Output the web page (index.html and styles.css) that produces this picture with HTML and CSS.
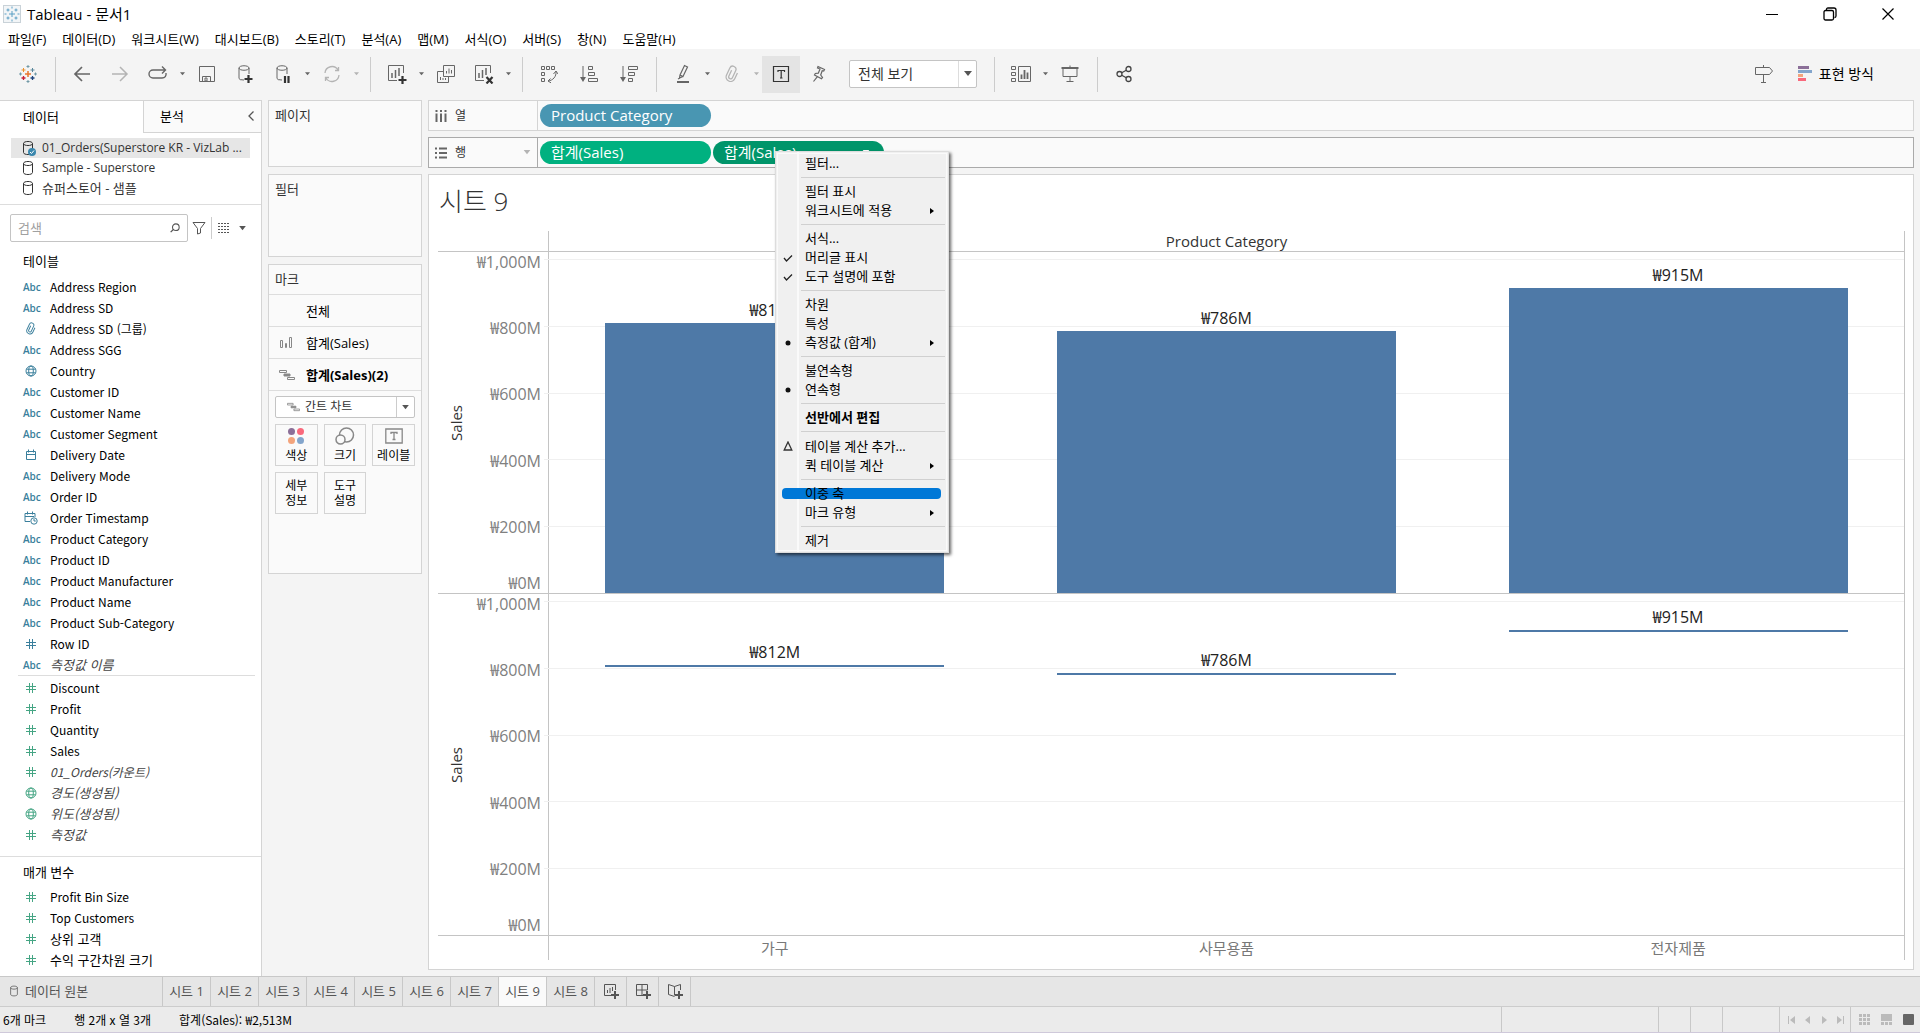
FILE: index.html
```html
<!DOCTYPE html>
<html lang="ko">
<head>
<meta charset="utf-8">
<title>Tableau - 문서1</title>
<link rel="stylesheet" href="styles.css">
</head>
<body>

<!-- shared icons -->
<svg class="sprite">
  <symbol id="i-down" viewBox="0 0 8 6"><path d="M0 0h8L4 5z" fill="currentColor"/></symbol>
  <symbol id="i-hash" viewBox="0 0 12 12"><path d="M4.500 1v10M7.500 1v10M1 4.500h10M1 7.500h10" fill="none" stroke="currentColor"/></symbol>
  <symbol id="i-globe" viewBox="0 0 12 12"><g fill="none" stroke="currentColor"><circle cx="6" cy="6" r="5"/><ellipse cx="6" cy="6" rx="2.3" ry="5"/><path d="M1.5 4.2h9M1.5 7.8h9"/></g></symbol>
  <symbol id="i-clip" viewBox="0 0 12 14"><path transform="rotate(25 6 7)" d="M4.500 4.500v5a1.500 1.500 0 0 0 3 0v-6a2.500 2.500 0 0 0-5 0v6a3.500 3.500 0 0 0 7 0v-5" fill="none" stroke="currentColor"/></symbol>
  <symbol id="i-cal" viewBox="0 0 12 12"><path d="M1.500 2.500h9v8h-9zM1.500 5.500h9M3.500 .5v3M8.500 .5v3" fill="none" stroke="currentColor"/></symbol>
  <symbol id="i-caltime" viewBox="0 0 14 14"><g fill="none" stroke="currentColor"><path d="M6 10.500H1v-8h10v3.500M1 5.500h9M3.500 .5v3M8.500 .5v3"/><circle cx="10" cy="10" r="3.200"/><path d="M10 8v2h1.800"/></g></symbol>
  <symbol id="i-db" viewBox="0 0 12 16"><path d="M1.500 3.500v9c0 2.700 9 2.700 9 0v-9M1.500 3.500c0-2.700 9-2.700 9 0s-9 2.700-9 0z" fill="none" stroke="currentColor"/></symbol>
  <symbol id="i-gantt" viewBox="0 0 16 12"><g fill="none" stroke="currentColor"><path d="M.5 1.500h7v2h-7z"/><path d="M5 5h6v2H5z" fill="currentColor"/><path d="M8.500 8.500h7v2h-7z"/></g></symbol>
</svg>

<header class="titlebar">
  <svg class="app-icon" width="18" height="18" viewBox="0 0 18 18"><rect x=".5" y=".5" width="17" height="17" fill="#f2f5f7" stroke="#c9d2d8"/><path d="M9 6v6M6 9h6M5 3.500v3M3.500 5h3M13 3.500v3M11.500 5h3M5 11.500v3M3.500 13h3M13 11.500v3M11.500 13h3M9 1.500v2M9 14.500v2M1.500 9h2M14.500 9h2" stroke="#5b9fc4"/></svg>
  <h1 class="app-title">Tableau - 문서1</h1>
  <div class="window-buttons">
    <button aria-label="최소화"><svg width="12" height="12"><path d="M0 6.500h12" stroke="#000"/></svg></button>
    <button aria-label="이전 크기로"><svg width="14" height="14"><path d="M3.500 3V2.500q0-1.500 1.500-1.500h6q2 0 2 2v6q0 1.500-1.500 1.500" fill="none" stroke="#000" stroke-width="1.300"/><rect x="1" y="3.500" width="9.500" height="9.500" rx="1.500" fill="none" stroke="#000" stroke-width="1.300"/></svg></button>
    <button aria-label="닫기"><svg width="12" height="12"><path d="M.5 .5l11 11M11.500 .5l-11 11" stroke="#000" stroke-width="1.200"/></svg></button>
  </div>
</header>

<nav class="menubar">
  <button>파일(F)</button>
  <button>데이터(D)</button>
  <button>워크시트(W)</button>
  <button>대시보드(B)</button>
  <button>스토리(T)</button>
  <button>분석(A)</button>
  <button>맵(M)</button>
  <button>서식(O)</button>
  <button>서버(S)</button>
  <button>창(N)</button>
  <button>도움말(H)</button>
</nav>

<div class="toolbar">
  <button class="tool" aria-label="시작 페이지"><svg width="18" height="18" viewBox="0 0 18 18"><path d="M9 6v6M6 9h6" stroke="#e8762c" stroke-width="1.500"/><path d="M4.500 3v4M2.500 5h4" stroke="#eb912c"/><path d="M13.500 3v4M11.500 5h4" stroke="#59879b"/><path d="M4.500 11v4M2.500 13h4" stroke="#c72035" stroke-width="1.300"/><path d="M13.500 11v4M11.500 13h4" stroke="#1f457e" stroke-width="1.300"/><path d="M9 0v3M7.500 1.500h3M9 15v3M7.500 16.500h3M1.500 7.500v3M0 9h3M16.500 7.500v3M15 9h3" stroke="#7199a6"/></svg></button>
  <span class="sep"></span>
  <button class="tool" aria-label="뒤로"><svg width="18" height="18"><path d="M17 9H2M9 2L2 9l7 7" fill="none" stroke="currentColor" stroke-width="1.700"/></svg></button>
  <button class="tool off" aria-label="앞으로"><svg width="18" height="18"><path d="M1 9h15M9 2l7 7-7 7" fill="none" stroke="currentColor" stroke-width="1.500"/></svg></button>
  <button class="tool" aria-label="다시 재생"><svg width="20" height="16"><path d="M8 12H5a4 4 0 0 1 0-8h12M14 .500l3.500 3.500-3.500 3.500M18 7c.5 3-1 5-4 5H8" fill="none" stroke="currentColor" stroke-width="1.400"/></svg></button>
  <button class="caret"><svg width="5" height="4"><use href="#i-down"/></svg></button>
  <button class="tool" aria-label="저장"><svg width="18" height="18"><path d="M1.500 1.500h15v15h-15zM4.500 16v-4.500h8V16M7 13h2v3H7z" fill="none" stroke="currentColor"/></svg></button>
  <button class="tool" aria-label="새 데이터 원본"><svg width="18" height="20"><path d="M13 10V4M3 4v10.500q0 1.500 5 1.500M3 4c0-3 10-3 10 0s-10 3-10 0z" fill="none" stroke="currentColor"/><path d="M12.500 11v8M8.500 15h8" stroke="#333" stroke-width="2.200"/></svg></button>
  <button class="tool" aria-label="자동 업데이트 일시 중지"><svg width="18" height="20"><path d="M13 10V4M3 4v10.500q0 1.500 5 1.500M3 4c0-3 10-3 10 0s-10 3-10 0z" fill="none" stroke="currentColor"/><path d="M11 12v7M14.500 12v7" stroke="#333" stroke-width="2.200"/></svg></button>
  <button class="caret"><svg width="5" height="4"><use href="#i-down"/></svg></button>
  <button class="tool off" aria-label="새로 고침"><svg width="18" height="18"><path d="M2 8a7 7 0 0 1 13-3M16 10a7 7 0 0 1-13 3M12 5.500h3.500V2M6 12.500H2.500V16" fill="none" stroke="currentColor" stroke-width="1.300"/></svg></button>
  <button class="caret off"><svg width="5" height="4"><use href="#i-down"/></svg></button>
  <span class="sep"></span>
  <button class="tool" aria-label="새 워크시트"><svg width="20" height="20"><path d="M16.500 9V1.500h-15v15H10" fill="none" stroke="currentColor"/><path d="M5 14V9M8.500 14V6M12 12V4" stroke="currentColor" stroke-width="1.500"/><path d="M15.500 12v8M11.500 16h8" stroke="#333" stroke-width="2.200"/></svg></button>
  <button class="caret"><svg width="5" height="4"><use href="#i-down"/></svg></button>
  <button class="tool" aria-label="복제"><svg width="18" height="18"><path d="M6.500 .5h11v11h-11zM6 6.500H.5v11h11V12M9.500 8.500V6M12 8.500V3.500M14.500 8.500V5M3.500 15v-3M6 15v-2M8.500 15v-2" fill="none" stroke="currentColor"/></svg></button>
  <button class="tool" aria-label="시트 지우기"><svg width="20" height="20"><path d="M16.500 9V1.500h-15v15H10" fill="none" stroke="currentColor"/><path d="M5 14V9M8.500 14V6M12 11V4" stroke="currentColor" stroke-width="1.500"/><path d="M12.500 13l6 6.500M18.500 13l-6 6.500" stroke="#333" stroke-width="2.200"/></svg></button>
  <button class="caret"><svg width="5" height="4"><use href="#i-down"/></svg></button>
  <span class="sep"></span>
  <div class="tool-group">
    <button class="tool" aria-label="행과 열 바꾸기"><svg width="18" height="18"><path d="M1.500 1.500h3v3h-3zM6.500 1.500h3v3h-3zM11.500 1.500h3v3h-3zM1.500 7.500h3v3h-3zM1.500 13.500h3v3h-3zM16 6.500c.5 5-3 9-8 9.500M13.500 9L16 6l2 3M10.500 13.500L8 16l3 1.800" fill="none" stroke="currentColor"/></svg></button>
    <button class="tool" aria-label="오름차순 정렬"><svg width="18" height="18"><path d="M3 1v13M8.500 1.500h4v3h-4zM8.500 7.500h6v3h-6zM8.500 13.500h9v3h-9z" fill="none" stroke="currentColor"/><path d="M0 12h6l-3 5z" fill="currentColor"/></svg></button>
    <button class="tool" aria-label="내림차순 정렬"><svg width="18" height="18"><path d="M3 1v13M8.500 1.500h9v3h-9zM8.500 7.500h6v3h-6zM8.500 13.500h4v3h-4z" fill="none" stroke="currentColor"/><path d="M0 12h6l-3 5z" fill="currentColor"/></svg></button>
  </div>
  <span class="sep"></span>
  <button class="tool" aria-label="하이라이트"><svg width="14" height="20"><path d="M4 11L8.500 1.500l3 1.500L7 12.500zM4 11l-.5 3 3.500-1.500M2 15l2-1" fill="none" stroke="currentColor" stroke-width="1.200"/><path d="M1 18h12" stroke="currentColor" stroke-width="2"/></svg></button>
  <button class="caret"><svg width="5" height="4"><use href="#i-down"/></svg></button>
  <button class="tool off" aria-label="멤버 그룹화"><svg width="16" height="18"><use href="#i-clip"/></svg></button>
  <button class="caret off"><svg width="5" height="4"><use href="#i-down"/></svg></button>
  <button class="tool on" aria-label="마크 레이블 표시"><svg width="18" height="18"><path d="M1.500 1.500h15v15h-15zM6 7V5.500h6.500V7M9.200 5.500v7.500M8 13h2.500" fill="none" stroke="#333" stroke-width="1.200"/></svg></button>
  <button class="tool" aria-label="축 고정"><svg width="16" height="18"><path d="M7 1.500l6.500 3-.8 1.500-1.500-.3-1.500 4.300 1.800 2.500-1 1.200L3.500 10l.8-1.500 3-.3L9 4 6.500 3zM6.200 11.800L2.500 16.500" fill="none" stroke="currentColor" stroke-width="1.200"/></svg></button>
  <span class="select fit">
    <select aria-label="맞춤"><option>전체 보기</option></select>
    <span class="select-arrow"><svg width="8" height="6"><use href="#i-down"/></svg></span>
  </span>
  <span class="sep"></span>
  <button class="tool" aria-label="카드 표시/숨기기"><svg width="22" height="18"><path d="M1.500 1.500h4v3h-4zM1.500 7.500h4v3h-4zM1.500 13.500h4v3h-4zM8.500 1.500h12v15h-12z" fill="none" stroke="currentColor"/><path d="M11.500 14V9.500M14.500 14V5M17.500 14V7.500" stroke="currentColor" stroke-width="1.800"/></svg></button>
  <button class="caret"><svg width="5" height="4"><use href="#i-down"/></svg></button>
  <button class="tool" aria-label="프레젠테이션 모드"><svg width="18" height="18"><path d="M.5 3h17" stroke="currentColor" stroke-width="2"/><path d="M2 3v8.500h14V3M9 .5V2M9 11.500V16M5.500 16.500h7" fill="none" stroke="currentColor"/></svg></button>
  <span class="sep"></span>
  <button class="tool" aria-label="공유"><svg width="16" height="18"><g fill="none" stroke="#444" stroke-width="1.300"><circle cx="3.500" cy="9" r="2.500"/><circle cx="12.500" cy="4" r="2.500"/><circle cx="12.500" cy="14" r="2.500"/><path d="M5.700 7.800l4.600-2.600M5.700 10.200l4.600 2.600"/></g></svg></button>
  <button class="tool guide" aria-label="데이터 가이드"><svg width="20" height="20"><path d="M1.500 3.500h14l3 3.500-3 3.500h-14zM9.500 1v2.500M9.500 10.500V18M7 18.500h5" fill="none" stroke="currentColor"/></svg></button>
  <button class="showme"><svg width="14" height="16"><path fill="#8b6f98" d="M0 0h11v3H0z"/><path fill="#83a5cc" d="M0 4h14v3H0z"/><path fill="#f3a47c" d="M0 8h5v3H0z"/><path fill="#f9697c" d="M0 12h8v3H0z"/></svg>표현 방식</button>
</div>

<main class="workspace">

  <aside class="sidebar">
    <div class="side-tabs">
      <button class="side-tab active">데이터</button>
      <button class="side-tab">분석<svg width="6" height="10"><path d="M5.500 .5L1 5l4.500 4.500" fill="none" stroke="#555" stroke-width="1.300"/></svg></button>
    </div>
    <ul class="sources">
      <li class="selected"><svg width="14" height="16"><use href="#i-db" width="12"/><circle cx="10" cy="12" r="4" fill="#3a87ad"/><path d="M8 12l1.500 1.500L12 10.500" fill="none" stroke="#fff"/></svg><span>01_Orders(Superstore KR - VizLab ...</span></li>
      <li><svg width="14" height="16"><use href="#i-db" width="12"/></svg><span>Sample - Superstore</span></li>
      <li class="ko"><svg width="14" height="16"><use href="#i-db" width="12"/></svg><span>슈퍼스토어 - 샘플</span></li>
    </ul>
    <div class="search-row">
      <label class="search">
        <input type="text" placeholder="검색" aria-label="검색">
        <svg width="10" height="10" viewBox="0 0 12 12"><circle cx="7" cy="5" r="4" fill="none" stroke="#555" stroke-width="1.300"/><path d="M4.300 7.500L.8 11" stroke="#555" stroke-width="1.500"/></svg>
      </label>
      <button class="mini" aria-label="필터"><svg width="14" height="14"><path d="M1 1.500h12l-4.500 6v4.500L5.500 13V7.500z" fill="none" stroke="#555"/></svg></button>
      <button class="mini view-as" aria-label="보기"><svg width="12" height="10"><path d="M0 .5h12M0 3.500h12M0 6.500h12M0 9.500h12" stroke="#555" stroke-dasharray="2 1"/></svg><svg width="7" height="5"><use href="#i-down"/></svg></button>
    </div>

    <h2 class="side-heading">테이블</h2>
    <ul class="fields dims">
      <li><i class="abc">Abc</i>Address Region</li>
      <li><i class="abc">Abc</i>Address SD</li>
      <li><svg width="12" height="13"><use href="#i-clip"/></svg>Address SD (그룹)</li>
      <li><i class="abc">Abc</i>Address SGG</li>
      <li><svg width="12" height="12"><use href="#i-globe"/></svg>Country</li>
      <li><i class="abc">Abc</i>Customer ID</li>
      <li><i class="abc">Abc</i>Customer Name</li>
      <li><i class="abc">Abc</i>Customer Segment</li>
      <li><svg width="12" height="12"><use href="#i-cal"/></svg>Delivery Date</li>
      <li><i class="abc">Abc</i>Delivery Mode</li>
      <li><i class="abc">Abc</i>Order ID</li>
      <li><svg width="14" height="14"><use href="#i-caltime"/></svg>Order Timestamp</li>
      <li><i class="abc">Abc</i>Product Category</li>
      <li><i class="abc">Abc</i>Product ID</li>
      <li><i class="abc">Abc</i>Product Manufacturer</li>
      <li><i class="abc">Abc</i>Product Name</li>
      <li><i class="abc">Abc</i>Product Sub-Category</li>
      <li><svg width="12" height="12"><use href="#i-hash"/></svg>Row ID</li>
      <li class="gen ko"><i class="abc">Abc</i>측정값 이름</li>
    </ul>
    <ul class="fields measures">
      <li><svg width="12" height="12"><use href="#i-hash"/></svg>Discount</li>
      <li><svg width="12" height="12"><use href="#i-hash"/></svg>Profit</li>
      <li><svg width="12" height="12"><use href="#i-hash"/></svg>Quantity</li>
      <li><svg width="12" height="12"><use href="#i-hash"/></svg>Sales</li>
      <li class="gen"><svg width="12" height="12"><use href="#i-hash"/></svg>01_Orders(카운트)</li>
      <li class="gen ko"><svg width="12" height="12"><use href="#i-globe"/></svg>경도(생성됨)</li>
      <li class="gen ko"><svg width="12" height="12"><use href="#i-globe"/></svg>위도(생성됨)</li>
      <li class="gen ko"><svg width="12" height="12"><use href="#i-hash"/></svg>측정값</li>
    </ul>
    <section class="params">
      <h2 class="side-heading">매개 변수</h2>
      <ul class="fields measures">
        <li><svg width="12" height="12"><use href="#i-hash"/></svg>Profit Bin Size</li>
        <li><svg width="12" height="12"><use href="#i-hash"/></svg>Top Customers</li>
        <li class="ko"><svg width="12" height="12"><use href="#i-hash"/></svg>상위 고객</li>
        <li class="ko"><svg width="12" height="12"><use href="#i-hash"/></svg>수익 구간차원 크기</li>
      </ul>
    </section>
  </aside>

  <div class="cards">
    <section class="card pages"><h2>페이지</h2></section>
    <section class="card filters"><h2>필터</h2></section>
    <section class="card marks">
      <h2>마크</h2>
      <ul class="mark-list">
        <li>전체</li>
        <li><svg width="14" height="14"><path d="M1.500 4.500h2v7h-2zM6.500 7.500h1v4h-1zM10.500 1.500h2v10h-2z" fill="none" stroke="#888"/></svg>합계(Sales)</li>
        <li class="current"><svg width="16" height="12"><use href="#i-gantt"/></svg>합계(Sales)(2)</li>
      </ul>
      <span class="select mark-type">
        <svg class="select-icon" width="13" height="10"><use href="#i-gantt"/></svg>
        <select aria-label="마크 유형"><option>간트 차트</option></select>
        <span class="select-arrow"><svg width="7" height="5"><use href="#i-down"/></svg></span>
      </span>
      <div class="mark-buttons">
        <button><svg width="18" height="18"><circle cx="4.500" cy="4.500" r="3.500" fill="#8b6f98"/><circle cx="13.500" cy="4.500" r="3.500" fill="#f9697c"/><circle cx="4.500" cy="13.500" r="3.500" fill="#f3a47c"/><circle cx="13.500" cy="13.500" r="3.500" fill="#83a5cc"/></svg>색상</button>
        <button><svg width="20" height="18"><circle cx="11.500" cy="8" r="7" fill="none" stroke="#888" stroke-width="1.500"/><circle cx="5.500" cy="12.500" r="4.500" fill="#fafafa" stroke="#888" stroke-width="1.500"/></svg>크기</button>
        <button><svg width="18" height="18"><path d="M.8 2h16.400v14H.8zM6 7V5.500h6V7M9 5.500V12.500M7.500 12.500h3" fill="none" stroke="#888" stroke-width="1.300"/></svg>레이블</button>
        <button>세부<br>정보</button>
        <button>도구<br>설명</button>
      </div>
    </section>
  </div>

  <div class="view">
    <div class="shelf">
      <div class="shelf-name"><svg width="12" height="14"><path d="M1.500 1v2M6 1v2M10.500 1v2M1.500 4.500V13M6 4.500V13M10.500 4.500V13" stroke="#666" stroke-width="2"/></svg>열</div>
      <div class="pills">
        <div class="pill dim">Product Category</div>
      </div>
    </div>
    <div class="shelf hover">
      <div class="shelf-name"><svg width="12" height="12"><path d="M0 1.500h2M4 1.500h8M0 6h2M4 6h8M0 10.500h2M4 10.500h8" stroke="#666" stroke-width="2"/></svg>행<svg class="shelf-caret" width="8" height="5"><use href="#i-down"/></svg></div>
      <div class="pills">
        <div class="pill">합계(Sales)</div>
        <div class="pill open">합계(Sales)<svg class="pill-caret" width="8" height="5"><use href="#i-down"/></svg>
          <ul class="menu">
            <li>필터...</li>
            <li class="line"></li>
            <li>필터 표시</li>
            <li class="sub">워크시트에 적용</li>
            <li class="line"></li>
            <li>서식...</li>
            <li><svg width="10" height="8"><path d="M1 4l2.500 3L9 1.500" fill="none" stroke="#222" stroke-width="1.300"/></svg>머리글 표시</li>
            <li><svg width="10" height="8"><path d="M1 4l2.500 3L9 1.500" fill="none" stroke="#222" stroke-width="1.300"/></svg>도구 설명에 포함</li>
            <li class="line"></li>
            <li>차원</li>
            <li>특성</li>
            <li class="sub"><svg width="10" height="6"><circle cx="5" cy="3" r="2.500" fill="#111"/></svg>측정값 (합계)</li>
            <li class="line"></li>
            <li>불연속형</li>
            <li><svg width="10" height="6"><circle cx="5" cy="3" r="2.500" fill="#111"/></svg>연속형</li>
            <li class="line"></li>
            <li class="bold">선반에서 편집</li>
            <li class="line"></li>
            <li class="calc"><svg width="10" height="10"><path d="M5 1L8.800 9H1.200z" fill="none" stroke="#333" stroke-width="1.300"/></svg>테이블 계산 추가...</li>
            <li class="sub">퀵 테이블 계산</li>
            <li class="line"></li>
            <li class="hot">이중 축</li>
            <li class="sub">마크 유형</li>
            <li class="line"></li>
            <li>제거</li>
          </ul>
        </div>
      </div>
    </div>

    <section class="sheet">
      <h2 class="sheet-title">시트 9</h2>
      <div class="chart">
        <div class="corner"></div>
        <div class="col-title">Product Category</div>

        <div class="axis">
          <div class="axis-title">Sales</div>
          <div class="ticks">
            <span>₩1,000M</span><span>₩800M</span><span>₩600M</span><span>₩400M</span><span>₩200M<b>₩0M</b></span>
          </div>
        </div>
        <div class="plot">
          <div class="gridlines"><i></i><i></i><i></i><i></i><i></i></div>
          <div class="col"><span>₩812M</span><div class="bar" style="height:79.200%"></div></div>
          <div class="col"><span>₩786M</span><div class="bar" style="height:76.900%"></div></div>
          <div class="col"><span>₩915M</span><div class="bar" style="height:89.500%"></div></div>
        </div>

        <div class="axis">
          <div class="axis-title">Sales</div>
          <div class="ticks">
            <span>₩1,000M</span><span>₩800M</span><span>₩600M</span><span>₩400M</span><span>₩200M<b>₩0M</b></span>
          </div>
        </div>
        <div class="plot">
          <div class="gridlines"><i></i><i></i><i></i><i></i><i></i></div>
          <div class="col"><span>₩812M</span><div class="gantt" style="height:79.200%"></div></div>
          <div class="col"><span>₩786M</span><div class="gantt" style="height:76.900%"></div></div>
          <div class="col"><span>₩915M</span><div class="gantt" style="height:89.500%"></div></div>
        </div>

        <div class="corner"></div>
        <div class="col-names"><span>가구</span><span>사무용품</span><span>전자제품</span></div>
      </div>
    </section>
  </div>
</main>

<nav class="sheet-tabs">
  <button class="source-tab"><svg width="10" height="12" viewBox="0 0 12 16"><use href="#i-db"/></svg>데이터 원본</button>
  <button>시트 1</button>
  <button>시트 2</button>
  <button>시트 3</button>
  <button>시트 4</button>
  <button>시트 5</button>
  <button>시트 6</button>
  <button>시트 7</button>
  <button class="active">시트 9</button>
  <button>시트 8</button>
  <button class="new" aria-label="새 워크시트"><svg width="16" height="16"><path d="M12.500 7V1.500h-11v11H8M4.500 10V7M7 10V5M9.500 8V4" fill="none" stroke="currentColor"/><path d="M12 8v8M8 12h8" stroke="currentColor" stroke-width="2"/></svg></button>
  <button class="new" aria-label="새 대시보드"><svg width="16" height="16"><path d="M12.500 7V1.500h-11v11H8M1.500 7h11M7 1.500v11" fill="none" stroke="currentColor"/><path d="M12 8v8M8 12h8" stroke="currentColor" stroke-width="2"/></svg></button>
  <button class="new" aria-label="새 스토리"><svg width="16" height="16"><path d="M13.500 7V1.500L7.500 3.500 1.500 1.500v10l6 2M7.500 3.500v9" fill="none" stroke="currentColor"/><path d="M12 8v8M8 12h8" stroke="currentColor" stroke-width="2"/></svg></button>
</nav>

<footer class="status">
  <span>6개 마크</span>
  <span>행 2개 x 열 3개</span>
  <span>합계(Sales): ₩2,513M</span>
  <div class="status-right">
    <div class="slot user"></div>
    <div class="slot"></div>
    <div class="slot"></div>
    <div class="slot wide"></div>
    <div class="slot pager">
      <svg width="8" height="8"><path d="M.5 0v8" stroke="#bbb"/><path d="M7 0v8L2 4z" fill="#bbb"/></svg>
      <svg width="8" height="8"><path d="M6 0v8L1 4z" fill="#bbb"/></svg>
      <svg width="8" height="8"><path d="M2 0v8l5-4z" fill="#bbb"/></svg>
      <svg width="8" height="8"><path d="M7.500 0v8" stroke="#bbb"/><path d="M1 0v8l5-4z" fill="#bbb"/></svg>
    </div>
    <div class="slot modes">
      <svg width="11" height="11"><path d="M0 1.500h11M0 5.500h11M0 9.500h11" stroke="#bbb" stroke-width="3" stroke-dasharray="3 1"/></svg>
      <svg width="11" height="11"><path d="M0 0h11v7H0z" fill="#bbb"/><path d="M0 9.500h11" stroke="#bbb" stroke-width="3" stroke-dasharray="3 1"/></svg>
      <svg width="11" height="11"><rect width="11" height="11" rx="1" fill="#666"/></svg>
    </div>
  </div>
</footer>

</body>
</html>
```

FILE: styles.css
```css
* {
  box-sizing: border-box;
}

body {
  margin: 0;
  height: 100vh;
  display: flex;
  flex-direction: column;
  overflow: hidden;
  background: #f4f4f4;
  color: #000;
  font: 12px/16px "Open Sans", "Noto Sans CJK KR", sans-serif;
}

h1, h2, ul {
  margin: 0;
  padding: 0;
  font-size: 13px;
  font-weight: normal;
  list-style: none;
}

button, select, input {
  margin: 0;
  padding: 0;
  border: 0;
  background: none;
  color: inherit;
  font: inherit;
}

svg {
  display: block;
  flex: none;
}

.sprite {
  position: absolute;
  width: 0;
  height: 0;
}

/* window title and menus */
.titlebar {
  display: flex;
  align-items: center;
  height: 28px;
  padding: 0 3px;
  background: #fff;
}

.app-title {
  margin-left: 6px;
  font-size: 15px;
}

.window-buttons {
  display: flex;
  margin-left: auto;
}

.window-buttons button {
  display: grid;
  place-items: center;
  width: 58px;
  height: 28px;
}

.menubar {
  display: flex;
  gap: 16px;
  height: 21px;
  padding-left: 8px;
  background: #fff;
  font-size: 13px;
}

/* toolbar */
.toolbar {
  display: flex;
  align-items: center;
  height: 51px;
  padding: 0 46px 1px 9px;
  color: #666;
}

.tool, .caret {
  display: grid;
  place-items: center;
  flex: none;
  width: 38px;
  height: 37px;
}

.caret {
  width: 11px;
}

.off {
  color: #b4b4b4;
}

.on {
  background: #e4e4e4;
}

.sep {
  width: 1px;
  height: 35px;
  margin: 0 7px 0 8px;
  background: #ccc;
}

.tool-group {
  display: flex;
  gap: 2px;
}

.select {
  position: relative;
  display: flex;
  background: #fff;
  border: 1px solid #c4c4c4;
  border-radius: 2px;
}

.select select {
  flex: 1;
  appearance: none;
  color: #333;
}

.select-arrow {
  position: absolute;
  top: 0;
  bottom: 0;
  right: 0;
  width: 18px;
  display: grid;
  place-items: center;
  border-left: 1px solid #ddd;
  color: #555;
  pointer-events: none;
}

.fit {
  width: 128px;
  height: 28px;
  margin: 0 9px 0 11px;
}

.fit select {
  padding-left: 8px;
  font-size: 14px;
}

.guide {
  margin-left: auto;
  margin-right: 15px;
}

.showme {
  display: flex;
  align-items: center;
  gap: 7px;
  color: #000;
  font-size: 14px;
}

/* workspace */
.workspace {
  flex: 1;
  min-height: 0;
  display: flex;
  gap: 6px;
  padding-right: 6px;
}

.sidebar {
  flex: none;
  width: 262px;
  background: #fff;
  border: 1px solid #d4d4d4;
  border-width: 1px 1px 0 0;
  display: flex;
  flex-direction: column;
}

.side-tabs {
  display: flex;
  height: 32px;
  font-size: 13px;
}

.side-tab {
  width: 143px;
  padding-left: 23px;
  text-align: left;
}

.side-tab + .side-tab {
  flex: 1;
  display: flex;
  align-items: center;
  justify-content: space-between;
  padding: 0 7px 2px 16px;
  background: #fafafa;
  border: 1px solid #d4d4d4;
  border-width: 0 0 1px 1px;
}

.sources {
  padding: 5px 11px 6px;
  border-bottom: 1px solid #ddd;
  font-size: 12px;
  color: #333;
}

.sources li {
  display: flex;
  align-items: center;
  gap: 6px;
  height: 20px;
  padding-left: 11px;
}

.sources .selected {
  background: #e6e6e6;
}

.sources span {
  white-space: nowrap;
}

.ko, .sources .ko {
  font-size: 13px;
}

.search-row {
  display: flex;
  align-items: center;
  padding: 9px 0 0 10px;
}

.search {
  display: flex;
  align-items: center;
  width: 178px;
  height: 28px;
  padding: 0 7px;
  border: 1px solid #c4c4c4;
  border-radius: 2px;
}

.search input {
  flex: 1;
  min-width: 0;
  font-size: 13px;
}

.search input::placeholder {
  color: #a0a0a0;
}

.mini {
  display: flex;
  align-items: center;
  height: 22px;
  padding: 0 4px;
  color: #555;
}

.mini.view-as {
  gap: 9px;
  margin-left: 1px;
  padding: 0 6px;
  border-left: 1px solid #ccc;
}

.side-heading {
  padding: 10px 0 6px 23px;
  line-height: 18px;
}

.fields, .status {
  font-family: "Noto Sans CJK KR", sans-serif;
}

.fields {
  font-size: 12px;
}

.fields li {
  display: flex;
  align-items: center;
  height: 21px;
}

/* the icon sits in a 50px column, centred a little right of its middle */
.fields li > svg {
  width: 62px;
  margin-right: -12px;
}

.dims svg, .abc {
  color: #3a7f9c;
}

.measures svg {
  color: #45a584;
}

.abc {
  width: 50px;
  padding-left: 23px;
  font: 600 10px "Open Sans", sans-serif;
}

.gen {
  font-style: italic;
  color: #444;
}

.fields .ko {
  font-size: 13px;
}

.dims::after {
  content: "";
  display: block;
  height: 1px;
  margin: 0 6px 1px 18px;
  background: #ddd;
}

.params {
  margin-top: 11px;
  border-top: 1px solid #ddd;
}

.params .side-heading {
  padding: 6px 0 5px 23px;
}

/* cards */
.cards {
  flex: none;
  width: 154px;
  display: flex;
  flex-direction: column;
  gap: 7px;
}

.card {
  background: #fafafa;
  border: 1px solid #d4d4d4;
}

.card h2 {
  padding: 6px 6px 7px;
  color: #333;
  line-height: 16px;
}

.pages {
  height: 67px;
}

.filters {
  height: 83px;
}

.marks {
  height: 310px;
}

.mark-list li {
  display: flex;
  align-items: center;
  height: 32px;
  padding-left: 37px;
  border-top: 1px solid #ddd;
  font-size: 13px;
}

.mark-list {
  border-bottom: 1px solid #ddd;
}

.mark-list svg {
  width: 16px;
  margin: 0 11px 0 -27px;
  color: #888;
}

.mark-list .current {
  font-weight: bold;
}

.mark-type {
  height: 22px;
  margin: 5px 6px 6px;
}

.mark-type select {
  padding-left: 29px;
}

.select-icon {
  position: absolute;
  left: 11px;
  top: 5px;
  color: #888;
}

.mark-type .select-arrow {
  border-left-color: #ccc;
}

.mark-buttons {
  display: grid;
  grid-template-columns: repeat(3, 1fr);
  gap: 6px;
  padding: 0 6px;
}

.mark-buttons button {
  display: flex;
  flex-direction: column;
  align-items: center;
  justify-content: center;
  gap: 3px;
  height: 42px;
  border: 1px solid #d4d4d4;
  font-size: 12px;
  line-height: 15px;
}

/* shelves */
.view {
  flex: 1;
  min-width: 0;
  display: flex;
  flex-direction: column;
  gap: 6px;
  padding-bottom: 6px;
}

.shelf {
  flex: none;
  display: flex;
  height: 31px;
  background: #fafafa;
  border: 1px solid #d4d4d4;
}

.shelf.hover {
  border-color: #aaa;
}

.shelf-name {
  display: flex;
  align-items: center;
  gap: 8px;
  width: 109px;
  padding: 0 6px;
  border-right: 1px solid #d4d4d4;
  color: #333;
}

.hover .shelf-name {
  border-right-color: #aaa;
}

.shelf-caret {
  margin-left: auto;
  color: #b4b4b4;
}

.pills {
  display: flex;
  align-items: center;
  gap: 2px;
  padding-left: 2px;
}

.pill {
  position: relative;
  width: 171px;
  height: 23px;
  padding-left: 11px;
  border-radius: 12px;
  background: #00b180;
  color: #fff;
  font-size: 15px;
  line-height: 22px;
}

.pill.dim {
  background: #4996b2;
}

.pill.open {
  background: #00956a;
}

.pill-caret {
  position: absolute;
  right: 14px;
  top: 9px;
}

/* context menu */
.menu {
  position: absolute;
  left: 62px;
  top: 10px;
  z-index: 5;
  width: 174px;
  display: flex;
  flex-direction: column;
  padding: 2px;
  background: linear-gradient(90deg, transparent 21px, #fafafa 21px, #fafafa 23px, transparent 23px) #f0f0f0;
  border: 1px solid #ddd;
  outline: 1px solid #fafafa;
  outline-offset: -3px;
  box-shadow: 2px 2px 3px rgba(0, 0, 0, 0.6);
  color: #000;
  line-height: 19px;
}

.menu li {
  display: flex;
  align-items: center;
  height: 19px;
  padding-left: 27px;
}

.menu li > svg {
  margin: 0 12px 0 -22px;
}

.menu .line {
  height: 1px;
  margin: 4px 1px 4px 23px;
  background: #d0d0d0;
}

.menu .bold {
  font-weight: bold;
}

.menu .calc {
  height: 20px;
}

.menu .sub::after {
  content: "";
  margin: 0 12px 0 auto;
  border: 3px solid transparent;
  border-left: 4px solid #000;
  border-right: 0;
}

.menu .hot {
  height: 11px;
  margin: 4px 5px 4px 4px;
  padding-left: 23px;
  border-radius: 4px;
  background: #0078d7;
}

/* sheet */
.sheet {
  flex: 1;
  min-height: 0;
  display: flex;
  flex-direction: column;
  padding: 8px 8px 9px 9px;
  background: #fff;
  border: 1px solid #d4d4d4;
}

.sheet-title {
  height: 48px;
  padding-left: 1px;
  color: #333;
  font-size: 26px;
  font-weight: 300;
  line-height: 36px;
}

.chart {
  flex: 1;
  min-height: 0;
  display: grid;
  grid-template-columns: 110px 1fr;
  grid-template-rows: 20px 1fr 1fr 25px;
  font-size: 15px;
}

.col-title {
  text-align: center;
  color: #333;
  line-height: 20px;
}

.col-title, .plot, .col-names {
  border: 1px solid #c4c4c4;
  border-width: 0 1px;
}

.axis, .plot, .col-names {
  border-top: 1px solid #c4c4c4;
}

.chart > :nth-last-child(-n+2) {
  border-top: 1px solid #c4c4c4;
}

.axis {
  display: flex;
  align-items: center;
  justify-content: space-between;
  padding-right: 7px;
}

.axis-title {
  width: 36px;
  writing-mode: vertical-rl;
  transform: rotate(180deg);
  line-height: 36px;
  color: #333;
}

/* each label is centred on its value line, the first and last stay inside the pane */
.ticks {
  align-self: stretch;
  display: flex;
  flex-direction: column;
  margin: -3px 0 10px;
  text-align: right;
  color: #808080;
  font-size: 16px;
  line-height: 20px;
}

.ticks span {
  flex: 1 0 0;
  display: flex;
  flex-direction: column;
  justify-content: space-between;
}

.ticks span:first-child {
  padding-top: 3px;
}

.ticks b {
  margin-bottom: -10px;
  font-weight: normal;
}

.plot {
  position: relative;
  display: grid;
  grid-template-columns: repeat(3, 1fr);
}

/* value lines, drawn behind the bars */
.gridlines {
  position: absolute;
  top: 7px;
  bottom: 0;
  left: -5px;
  right: 0;
  display: flex;
  flex-direction: column;
}

.gridlines i {
  flex: 1;
  border-top: 1px solid #f0f0f0;
}

.col {
  position: relative;
  display: flex;
  flex-direction: column;
  align-items: center;
  justify-content: flex-end;
  color: #222;
  font-size: 16px;
  line-height: 20px;
}

.col span {
  margin-bottom: 3px;
}

.bar, .gantt {
  width: 75%;
  background: #4e79a7;
}

.gantt {
  background: none;
  border-top: 2px solid #4e79a7;
}

.col-names {
  display: grid;
  grid-template-columns: repeat(3, 1fr);
  text-align: center;
  color: #787878;
  line-height: 24px;
}

/* sheet tabs */
.sheet-tabs {
  flex: none;
  display: flex;
  height: 30px;
  background: #e6e6e6;
  border-top: 1px solid #c8c8c8;
  color: #555;
  font-size: 13px;
}

.sheet-tabs button {
  display: flex;
  align-items: center;
  justify-content: center;
  width: 48px;
  padding-bottom: 2px;
  border-right: 1px solid #c8c8c8;
}

.sheet-tabs .source-tab {
  width: 163px;
  justify-content: flex-start;
  gap: 6px;
  padding-left: 9px;
}

.sheet-tabs .active {
  background: #fafafa;
}

.sheet-tabs .new {
  width: 32px;
}

.status {
  flex: none;
  display: flex;
  align-items: center;
  gap: 28px;
  height: 27px;
  padding-left: 3px;
  background: #ebebeb;
  border-top: 1px solid #ccc;
  border-bottom: 1px solid #cfc9da;
}

.status-right {
  align-self: stretch;
  display: flex;
  margin-left: auto;
}

.slot {
  width: 32px;
  display: flex;
  align-items: center;
  border-left: 1px solid #c8c8c8;
}

.slot.user {
  width: 157px;
}

.slot.wide {
  width: 57px;
}

.slot.pager {
  width: 71px;
  gap: 8px;
  padding-left: 8px;
}

.slot.modes {
  width: 70px;
  gap: 11px;
  padding-left: 8px;
}
```
